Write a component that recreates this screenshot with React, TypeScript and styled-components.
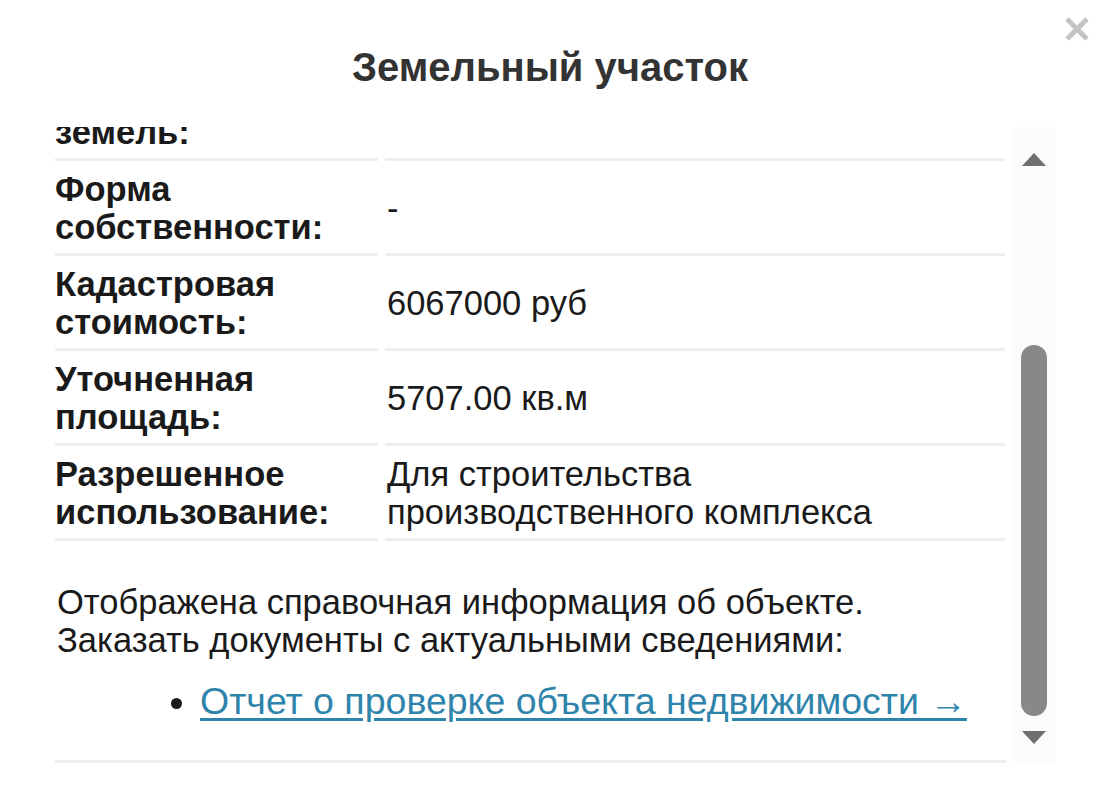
import { useEffect, useRef } from 'react'
import styled, { createGlobalStyle } from 'styled-components'

const GlobalStyle = createGlobalStyle`
  html, body {
    margin: 0;
    background: #fff;
  }
  body {
    font-family: 'Liberation Sans', Arial, sans-serif;
    color: #1a1a1a;
  }
`

const rows = [
  { label: 'Кадастровый номер:', value: '50:21:0110103:152' },
  { label: 'Статус:', value: 'Ранее учтенный' },
  { label: 'Категория земель:', value: 'Земли поселений' },
  { label: 'Форма собственности:', value: '-' },
  { label: 'Кадастровая стоимость:', value: '6067000 руб' },
  { label: 'Уточненная площадь:', value: '5707.00 кв.м' },
  {
    label: 'Разрешенное использование:',
    value: 'Для строительства производственного комплекса',
  },
]

const App = () => {
  const scrollRef = useRef<HTMLDivElement>(null)

  useEffect(() => {
    const el = scrollRef.current
    if (el) el.scrollTop = el.scrollHeight
  }, [])

  return (
    <>
      <GlobalStyle />
      <Popup>
        <CloseButton aria-label="Закрыть">
          <svg width="28" height="26" viewBox="0 0 28 26">
            <path
              d="M4 3 L24 23 M24 3 L4 23"
              stroke="#c4c4c4"
              strokeWidth="5"
              strokeLinecap="butt"
            />
          </svg>
        </CloseButton>
        <Title>Земельный участок</Title>
        <Body>
          <Viewport ref={scrollRef}>
            {rows.map((r) => (
              <Row key={r.label}>
                <Label>{r.label}</Label>
                <Value>{r.value}</Value>
              </Row>
            ))}
            <Note>
              Отображена справочная информация об объекте.
              <br />
              Заказать документы с актуальными сведениями:
            </Note>
            <Links>
              <li>
                <a href="#">Отчет о проверке объекта недвижимости →</a>
              </li>
            </Links>
            <Divider />
          </Viewport>
          <Scrollbar>
            <svg width="26" height="14" viewBox="0 0 26 14">
              <path d="M13 1 L25 14 L1 14 Z" fill="#6f6f6f" />
            </svg>
            <Track>
              <Thumb />
            </Track>
            <svg width="26" height="14" viewBox="0 0 26 14">
              <path d="M1 0 L25 0 L13 13 Z" fill="#6f6f6f" />
            </svg>
          </Scrollbar>
        </Body>
      </Popup>
    </>
  )
}

const Popup = styled.div`
  position: relative;
  width: 1100px;
  height: 807px;
  background: #fff;
  overflow: hidden;
`

const CloseButton = styled.button`
  position: absolute;
  top: 16px;
  right: 9px;
  padding: 0;
  border: 0;
  background: none;
  cursor: pointer;
  line-height: 0;
`

const Title = styled.h2`
  margin: 0;
  height: 127px;
  padding-top: 40px;
  box-sizing: border-box;
  text-align: center;
  font-size: 40px;
  line-height: 54px;
  font-weight: 700;
  color: #333;
`

const Body = styled.div`
  display: flex;
  gap: 6px;
  padding-left: 55px;
`

const Viewport = styled.div`
  width: 952px;
  height: 636px;
  overflow: hidden;
`

const Row = styled.div`
  display: grid;
  grid-template-columns: 323px 1fr;
  column-gap: 7px;
  margin-right: 2px;
`

const Cell = styled.div`
  display: flex;
  align-items: center;
  padding: 9px 0 7px;
  border-bottom: 3px solid #efefef;
  font-size: 34.5px;
  line-height: 38px;
`

const Label = styled(Cell)`
  font-weight: 700;
  padding-right: 14px;
`

const Value = styled(Cell)`
  padding-left: 2px;
  padding-right: 60px;
`

const Note = styled.p`
  margin: 42px 0 0 2px;
  font-size: 34.5px;
  line-height: 38px;
`

const Links = styled.ul`
  margin: 23px 0 0;
  padding-left: 145px;
  font-size: 37.5px;
  line-height: 38px;

  a {
    color: #2f84ab;
    text-decoration: underline;
    text-underline-offset: 4px;
  }
`

const Divider = styled.div`
  margin-top: 40px;
  border-bottom: 3px solid #efefef;
`

const Scrollbar = styled.div`
  width: 42px;
  height: 636px;
  padding: 25px 0 18px;
  box-sizing: border-box;
  display: flex;
  flex-direction: column;
  align-items: center;
  background: #fbfbfb;
`

const Track = styled.div`
  flex: 1;
  width: 100%;
  display: flex;
  flex-direction: column;
  justify-content: flex-end;
  align-items: center;
  padding-bottom: 15px;
`

const Thumb = styled.div`
  width: 26px;
  height: 371px;
  border-radius: 13px;
  background: #888;
`

export default App
